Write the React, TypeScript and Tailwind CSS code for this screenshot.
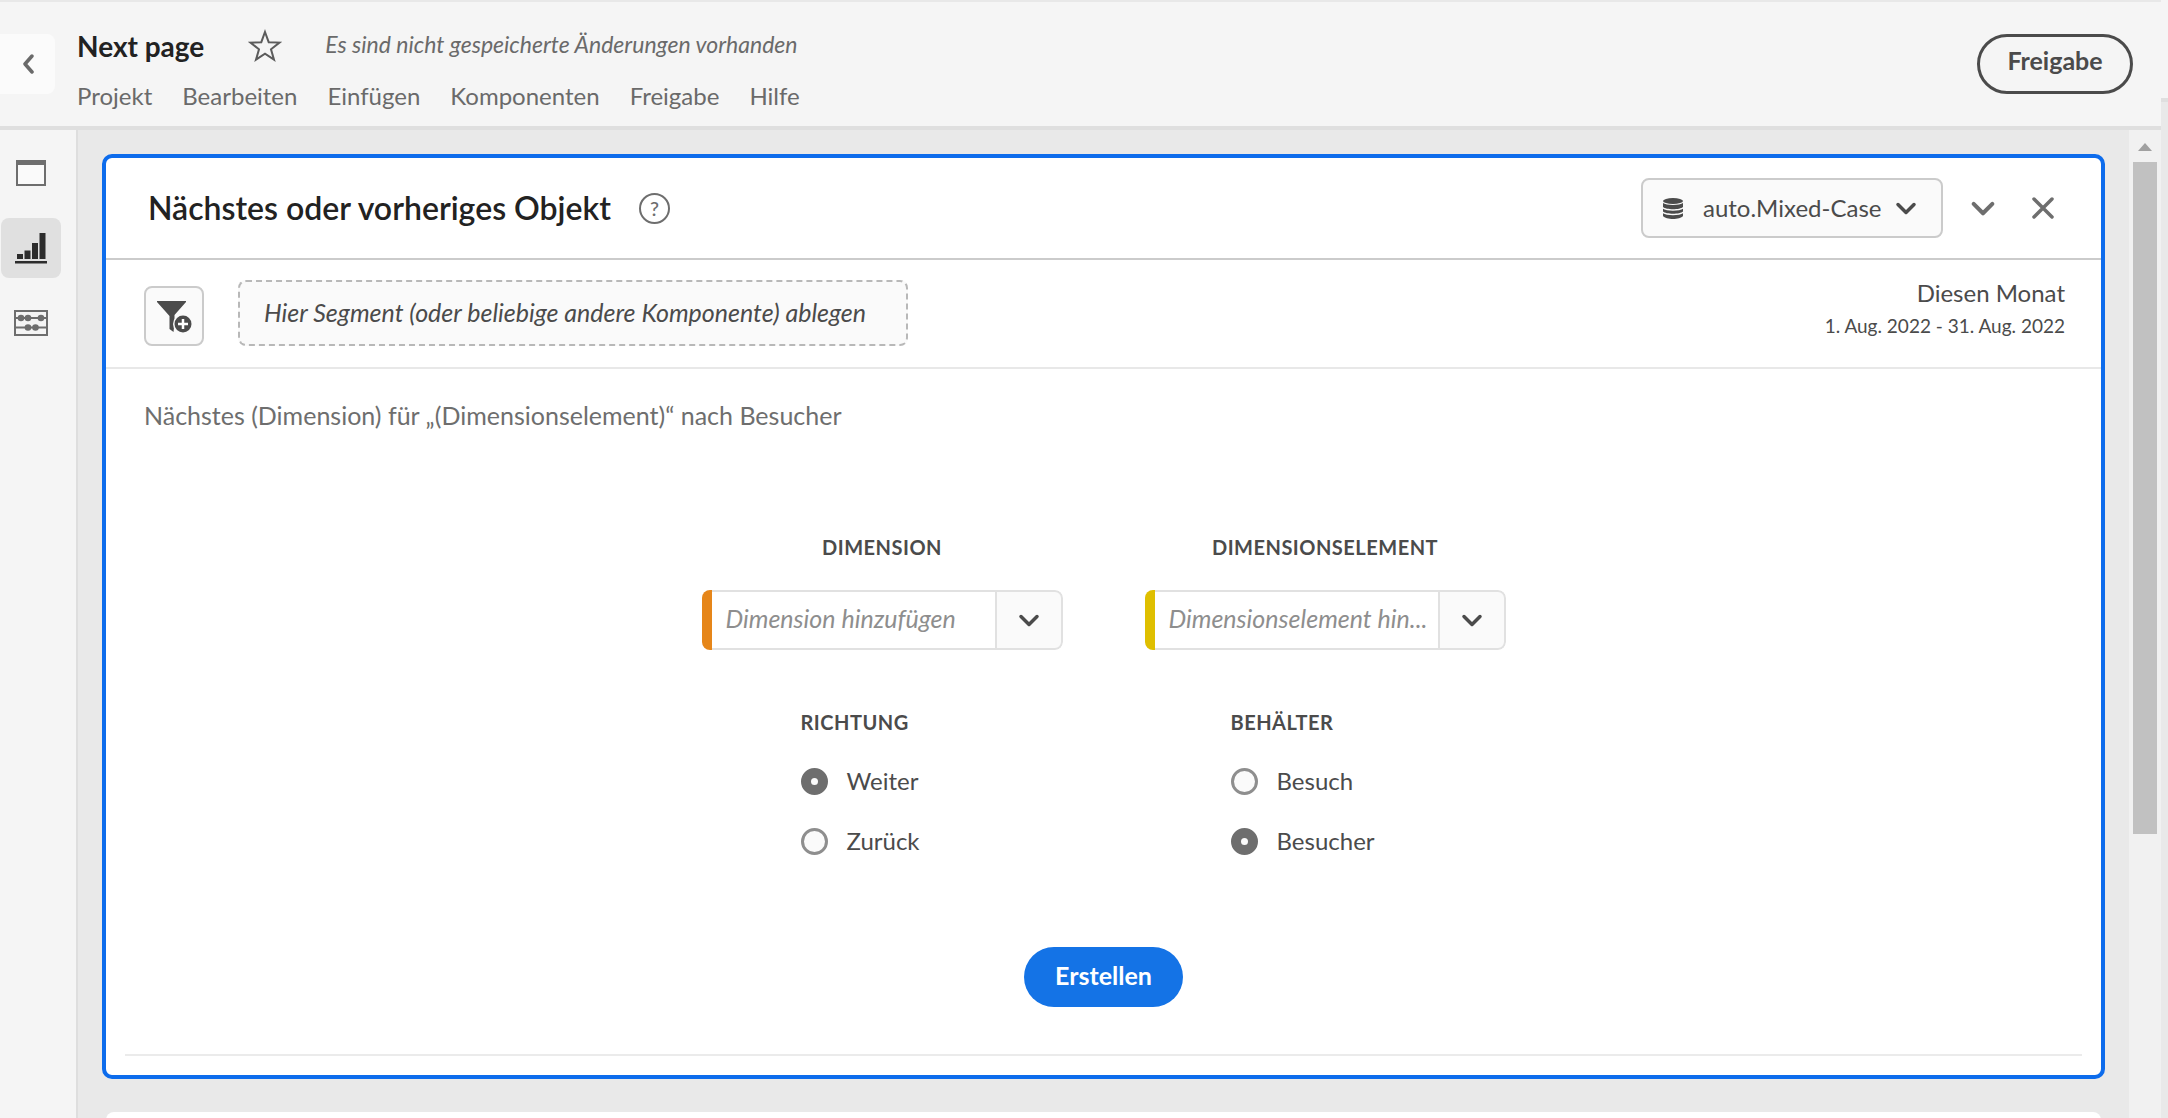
import React from 'react';

const menuItems = ['Projekt', 'Bearbeiten', 'Einfügen', 'Komponenten', 'Freigabe', 'Hilfe'];

function Chevron({ className }: { className: string }) {
  return (
    <svg viewBox="0 0 24 24" className={className} fill="none" stroke="currentColor" strokeWidth="3.500" strokeLinecap="round" strokeLinejoin="round" aria-hidden="true">
      <path d="M4 8.500 12 16.500 20 8.500" />
    </svg>
  );
}

function Header() {
  return (
    <header className="flex h-[130px] shrink-0 items-start justify-between border-t-2 border-b-4 border-t-[#e8e8e8] border-b-[#dfdfdf] bg-[#f5f5f5]">
      <div className="flex">
        <button type="button" aria-label="Zurück" className="mt-8 flex h-[60px] w-[55px] items-center justify-center rounded-r-lg bg-[#fbfbfb] text-[#6a6a6a]">
          <svg viewBox="0 0 14 20" className="h-5 w-3.5" fill="none" stroke="currentColor" strokeWidth="3.500" strokeLinecap="round" strokeLinejoin="round" aria-hidden="true">
            <path d="M11 2 4 10l7 8" />
          </svg>
        </button>
        <div className="ml-[22px] pt-6">
          <div className="flex h-10 items-start">
            <h1 className="text-[28px] leading-10 font-bold text-[#222]">Next page</h1>
            <button type="button" aria-label="Zu Favoriten hinzufügen" className="mt-0.5 ml-[43px] text-[#5c5c5c]">
              <svg viewBox="0 0 36 36" className="h-9 w-9" fill="none" stroke="currentColor" strokeWidth="2" aria-hidden="true">
                <path d="m18 4 3.700 10.200 10.800.4-8.500 6.700 3 10.400-9-6-9 6 3-10.400-8.500-6.700 10.800-.4z" />
              </svg>
            </button>
            <p className="ml-[42px] text-[23px] leading-9 text-[#6a6a6a] italic">Es sind nicht gespeicherte Änderungen vorhanden</p>
          </div>
          <nav className="mt-2.5 flex gap-[30px]">
            {menuItems.map((item) => (
              <a key={item} href="#" className="text-[24px] leading-10 text-[#6a6a6a]">{item}</a>
            ))}
          </nav>
        </div>
      </div>
      <button type="button" className="mt-8 mr-7 flex h-[60px] w-[156px] items-center justify-center rounded-full border-[3px] border-[#4b4b4b] pb-1.5 text-[25px] font-bold text-[#4b4b4b]">
        Freigabe
      </button>
    </header>
  );
}

function Sidebar() {
  return (
    <aside className="flex w-[78px] shrink-0 flex-col gap-[15px] border-r-2 border-[#dedede] bg-[#f5f5f5] pt-[13px] pl-px">
      <button type="button" aria-label="Bedienfelder" className="flex h-[60px] w-[60px] items-center justify-center rounded-lg text-[#6e6e6e]">
        <svg viewBox="0 0 30 26" className="h-[26px] w-[30px]" aria-hidden="true">
          <path d="M1 1h28v24H1z" fill="#fafafa" stroke="currentColor" strokeWidth="2" />
          <path d="M0 0h30v5H0z" fill="currentColor" />
        </svg>
      </button>
      <button type="button" aria-label="Visualisierungen" className="flex h-[60px] w-[60px] items-center justify-center rounded-lg bg-[#e0e0e0] text-[#2c2c2c]">
        <svg viewBox="0 0 32 32" className="h-8 w-8" fill="currentColor" aria-hidden="true">
          <path d="M2 22h6v5H2zM9.500 18.500h6V27h-6zM17 11h6v16h-6zM24.500 1h6v26h-6zM0 29h32v2.500H0z" />
        </svg>
      </button>
      <button type="button" aria-label="Komponenten" className="flex h-[60px] w-[60px] items-center justify-center rounded-lg text-[#6e6e6e]">
        <svg viewBox="0 0 34 26" className="h-[26px] w-[34px]" aria-hidden="true">
          <path d="M1 1h32v24H1zM1 8h32M1 17.500h32" fill="none" stroke="currentColor" strokeWidth="2" />
          <g fill="currentColor">
            <circle cx="7" cy="8" r="3.300" />
            <circle cx="14" cy="8" r="3.300" />
            <circle cx="27" cy="8" r="3.300" />
            <circle cx="14" cy="17.500" r="3.300" />
            <circle cx="21.500" cy="17.500" r="3.300" />
          </g>
        </svg>
      </button>
    </aside>
  );
}

function PanelHeader() {
  return (
    <div className="flex h-[102px] items-center justify-between border-b-2 border-[#cbcbcb] pr-11 pl-[42px]">
      <div className="flex items-center gap-7">
        <h2 className="text-[32px] leading-10 font-semibold text-[#222]">Nächstes oder vorheriges Objekt</h2>
        <button type="button" aria-label="Hilfe" className="flex h-[31px] w-[31px] items-center justify-center rounded-full border-2 border-[#6e6e6e] text-xl leading-none font-medium text-[#6e6e6e]">
          ?
        </button>
      </div>
      <div className="flex items-center">
        <div className="relative text-[#4b4b4b]">
          <select aria-label="Report Suite" className="h-[60px] w-[302px] appearance-none rounded-lg border-2 border-[#cbcbcb] bg-[#fafafa] pl-[60px] text-[24px]">
            <option>auto.Mixed-Case</option>
          </select>
          <svg viewBox="0 0 20 21" className="pointer-events-none absolute top-5 left-[22px] h-[21px] w-5" fill="currentColor" aria-hidden="true">
            <ellipse cx="10" cy="3" rx="10" ry="3" />
            <path d="M0 5c3 2.600 17 2.600 20 0v4c-3 3-17 3-20 0zM0 10.800c3 2.600 17 2.600 20 0v2.700c-3 3-17 3-20 0zM0 15.300c3 2.600 17 2.600 20 0V18c-3 4-17 4-20 0z" />
          </svg>
          <Chevron className="pointer-events-none absolute top-[18px] right-[25px] h-6 w-6" />
        </div>
        <button type="button" aria-label="Bereich reduzieren" className="ml-[26px] text-[#6e6e6e]">
          <Chevron className="h-7 w-7" />
        </button>
        <button type="button" aria-label="Schließen" className="ml-8 text-[#6e6e6e]">
          <svg viewBox="0 0 28 28" className="h-7 w-7" fill="none" stroke="currentColor" strokeWidth="3.500" strokeLinecap="round" aria-hidden="true">
            <path d="m5 5 18 18M23 5 5 23" />
          </svg>
        </button>
      </div>
    </div>
  );
}

function SegmentBar() {
  return (
    <div className="flex h-[109px] items-start justify-between border-b-2 border-[#e8e8e8] pt-4 pr-9 pl-[38px]">
      <div className="flex items-end gap-[34px] pt-1">
        <button type="button" aria-label="Segment hinzufügen" className="flex h-[60px] w-[60px] items-center justify-center rounded-lg border-2 border-[#cbcbcb] bg-[#fafafa]">
          <svg viewBox="0 0 36 34" className="h-[34px] w-9" aria-hidden="true">
            <path d="M1 2h29v1L18.500 16v8l-1 9-4-3V17L1 3z" fill="#4b4b4b" />
            <circle cx="27" cy="25" r="10" fill="#fafafa" />
            <circle cx="27" cy="25" r="8.500" fill="#4b4b4b" />
            <path d="M27 20v10M22 25h10" stroke="#fff" strokeWidth="2.500" />
          </svg>
        </button>
        <div className="flex h-[66px] items-center rounded-lg border-2 border-dashed border-[#b8b8b8] bg-[#fafafa] pr-10 pl-6 text-[25px] text-[#4b4b4b] italic">
          Hier Segment (oder beliebige andere Komponente) ablegen
        </div>
      </div>
      <div className="text-right text-[#4b4b4b]">
        <p className="text-[24px] leading-[34px]">Diesen Monat</p>
        <p className="text-[19px] leading-8">1. Aug. 2022 - 31. Aug. 2022</p>
      </div>
    </div>
  );
}

function ComboField({ id, label, placeholder, accent }: { id: string; label: string; placeholder: string; accent: string }) {
  return (
    <div className="flex w-[361px] flex-col items-center">
      <label htmlFor={id} className="text-[20px] leading-8 font-bold tracking-wide text-[#4b4b4b] uppercase">{label}</label>
      <div className="mt-[27px] flex h-[60px] w-full overflow-hidden rounded-lg">
        <span className={`w-2.5 shrink-0 ${accent}`} />
        <input id={id} type="text" placeholder={placeholder} className="min-w-0 flex-1 border-y-2 border-[#e1e1e1] bg-white pb-0.5 pl-3.5 text-[25px] text-[#4b4b4b] italic outline-none placeholder:text-[#8e8e8e]" />
        <button type="button" aria-label={`${label} auswählen`} className="flex w-[68px] shrink-0 items-center justify-center rounded-r-lg border-2 border-[#e1e1e1] bg-[#fafafa] text-[#4b4b4b]">
          <Chevron className="h-6 w-6" />
        </button>
      </div>
    </div>
  );
}

function RadioSet({ name, legend, options, selected }: { name: string; legend: string; options: string[]; selected: string }) {
  return (
    <fieldset className="w-[176px]">
      <legend className="text-[20px] leading-8 font-bold tracking-wide text-[#4b4b4b] uppercase">{legend}</legend>
      <div className="mt-[13px] flex flex-col">
        {options.map((option) => (
          <label key={option} className="flex h-[60px] items-center gap-[19px] text-[24px] text-[#4b4b4b]">
            <input type="radio" name={name} defaultChecked={option === selected} className="h-[27px] w-[27px] appearance-none rounded-full border-[3px] border-[#8e8e8e] bg-[#fafafa] checked:border-[10px] checked:border-[#6e6e6e]" />
            {option}
          </label>
        ))}
      </div>
    </fieldset>
  );
}

function Panel() {
  return (
    <section className="rounded-[10px] border-4 border-[#0d6cec] bg-white">
      <PanelHeader />
      <SegmentBar />
      <div className="mx-[19px] border-b-2 border-[#ebebeb] px-[19px] pb-[47px]">
        <p className="pt-[26px] text-[25px] leading-10 text-[#6e6e6e]">Nächstes (Dimension) für „(Dimensionselement)“ nach Besucher</p>
        <form className="flex flex-col items-center pt-24" onSubmit={(event) => event.preventDefault()}>
          <div className="flex gap-[82px]">
            <ComboField id="dimension" label="Dimension" placeholder="Dimension hinzufügen" accent="bg-[#e68619]" />
            <ComboField id="dimension-element" label="Dimensionselement" placeholder="Dimensionselement hin..." accent="bg-[#dfbf00]" />
          </div>
          <div className="mt-14 flex gap-[254px]">
            <RadioSet name="direction" legend="Richtung" options={['Weiter', 'Zurück']} selected="Weiter" />
            <RadioSet name="container" legend="Behälter" options={['Besuch', 'Besucher']} selected="Besucher" />
          </div>
          <button type="submit" className="mt-[76px] flex h-[60px] items-center rounded-full bg-[#1473e6] px-[31px] pb-0.5 text-[25px] font-bold text-white">
            Erstellen
          </button>
        </form>
      </div>
      <div className="h-[19px]" />
    </section>
  );
}

function ScrollTrack() {
  return (
    <div className="flex w-8 shrink-0 flex-col items-center bg-[#f1f1f1]" aria-hidden="true">
      <svg viewBox="0 0 14 8" className="mt-[13px] h-2 w-3.5" fill="#a0a0a0">
        <path d="M7 0l7 8H0z" />
      </svg>
      <div className="mt-[11px] h-[68%] w-6 bg-[#c1c1c1]" />
    </div>
  );
}

export default function App() {
  return (
    <div className="flex h-screen overflow-hidden bg-[#e9e9e9] font-['Lato',sans-serif]">
      <div className="flex min-w-0 flex-1 flex-col">
        <Header />
        <div className="flex min-h-0 flex-1">
          <Sidebar />
          <main className="min-w-0 flex-1 overflow-hidden pt-6 pr-6 pl-6">
            <Panel />
            <div className="mx-1 mt-[33px] h-16 rounded-lg bg-white" />
          </main>
          <ScrollTrack />
        </div>
      </div>
      <div className="w-[7px] shrink-0" aria-hidden="true">
        <div className="h-[102px] border-b-4 border-[#dfdfdf] bg-[#f5f5f5]" />
      </div>
    </div>
  );
}
